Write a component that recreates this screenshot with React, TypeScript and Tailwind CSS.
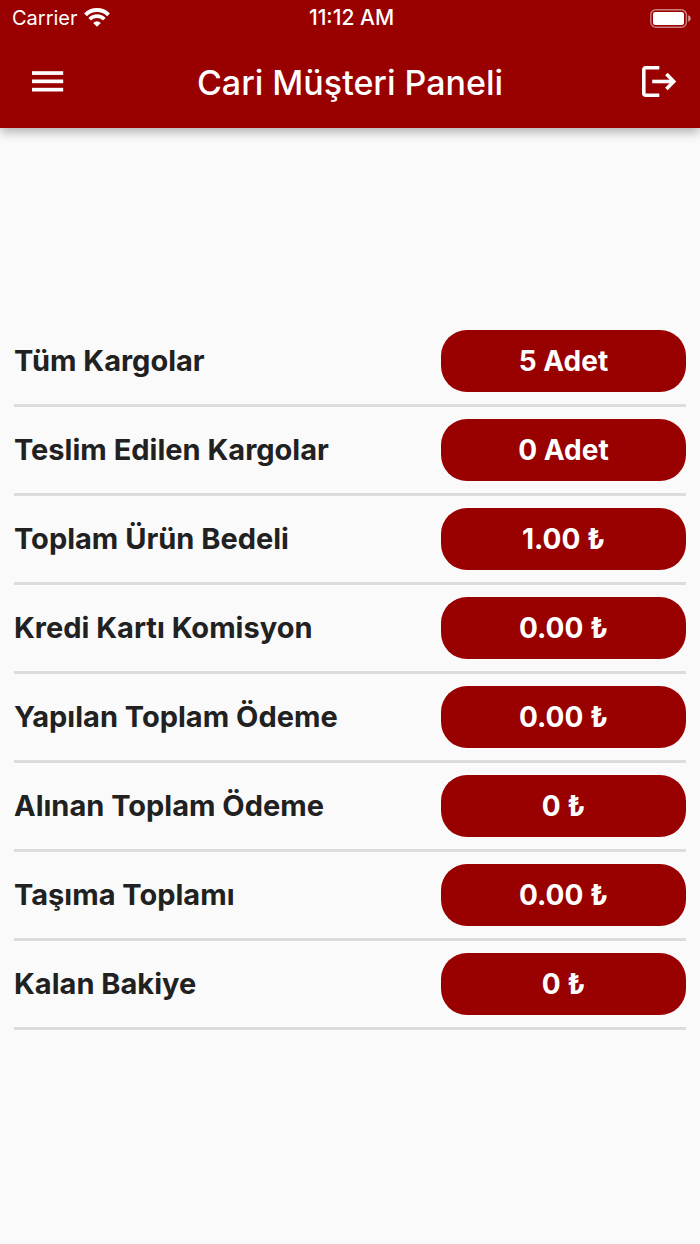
const totals = [
  { label: 'Tüm Kargolar', value: '5 Adet' },
  { label: 'Teslim Edilen Kargolar', value: '0 Adet' },
  { label: 'Toplam Ürün Bedeli', value: '1.00 ₺' },
  { label: 'Kredi Kartı Komisyon', value: '0.00 ₺' },
  { label: 'Yapılan Toplam Ödeme', value: '0.00 ₺' },
  { label: 'Alınan Toplam Ödeme', value: '0 ₺' },
  { label: 'Taşıma Toplamı', value: '0.00 ₺' },
  { label: 'Kalan Bakiye', value: '0 ₺' },
];

const WifiIcon = () => (
  <svg width="26" height="20" viewBox="0 0 26 20" fill="none" aria-hidden="true">
    <path d="M1.5 6.8a16.3 16.3 0 0 1 23 0" stroke="white" strokeWidth="4" />
    <path d="M5.7 11.2a10.4 10.4 0 0 1 14.6 0" stroke="white" strokeWidth="3.7" />
    <path d="M13 18.8 9.2 14.9a5.4 5.4 0 0 1 7.6 0Z" fill="white" />
  </svg>
);

const BatteryIcon = () => (
  <svg width="41" height="19" viewBox="0 0 41 19" fill="none" aria-hidden="true">
    <rect x="0.8" y="0.8" width="35.6" height="17.4" rx="5" stroke="white" strokeOpacity="0.5" strokeWidth="1.4" />
    <rect x="3" y="3" width="31" height="13" rx="2.2" fill="white" />
    <path d="M38.2 6.3c1.7.7 2.5 1.8 2.5 3.2s-.8 2.5-2.5 3.2Z" fill="white" fillOpacity="0.6" />
  </svg>
);

const MenuIcon = () => (
  <svg width="32" height="22" viewBox="0 0 32 22" fill="white" aria-hidden="true">
    <rect y="0.2" width="31.2" height="3.7" />
    <rect y="8.5" width="31.2" height="3.7" />
    <rect y="16.8" width="31.2" height="3.7" />
  </svg>
);

const LogoutIcon = () => (
  <svg width="36" height="32" viewBox="0 0 36 32" fill="none" stroke="white" strokeWidth="3.6" aria-hidden="true">
    <path d="M19.3 1.8H5.6a1.8 1.8 0 0 0-1.8 1.8v23.8a1.8 1.8 0 0 0 1.8 1.8h13.7" />
    <path d="M12.2 15.5h21.4" />
    <path d="m26.4 8.1 7.4 7.4-7.4 7.4" />
  </svg>
);

export default function App() {
  return (
    <div className="min-h-screen bg-[#fafafa] font-[Inter,sans-serif] text-[#212121]">
      <header className="bg-[#990000] text-white shadow-[0_4px_10px_rgba(0,0,0,0.3)]">
        <div className="grid h-9 grid-cols-3 items-center pr-[9px] pl-3 text-xl">
          <div className="flex items-center gap-1.5">
            <span>Carrier</span>
            <WifiIcon />
          </div>
          <span className="text-center text-[21px] font-medium">11:12 AM</span>
          <div className="flex justify-end">
            <BatteryIcon />
          </div>
        </div>
        <div className="flex h-23 items-center justify-between px-6">
          <button type="button" aria-label="Menü" className="flex w-12 justify-start pl-2">
            <MenuIcon />
          </button>
          <h1 className="text-[34px] font-medium">Cari Müşteri Paneli</h1>
          <button type="button" aria-label="Çıkış" className="flex w-12 justify-end">
            <LogoutIcon />
          </button>
        </div>
      </header>

      <main className="px-3.5 pt-[190px] pb-10">
        <dl>
          {totals.map(({ label, value }) => (
            <div
              key={label}
              className="flex items-center justify-between border-b-3 border-[#dcdcdc] py-3"
            >
              <dt className="text-[29px] font-bold">{label}</dt>
              <dd className="flex h-[62px] w-[245px] items-center justify-center rounded-[26px] bg-[#990000] text-[28px] font-bold text-white">
                {value}
              </dd>
            </div>
          ))}
        </dl>
      </main>
    </div>
  );
}
